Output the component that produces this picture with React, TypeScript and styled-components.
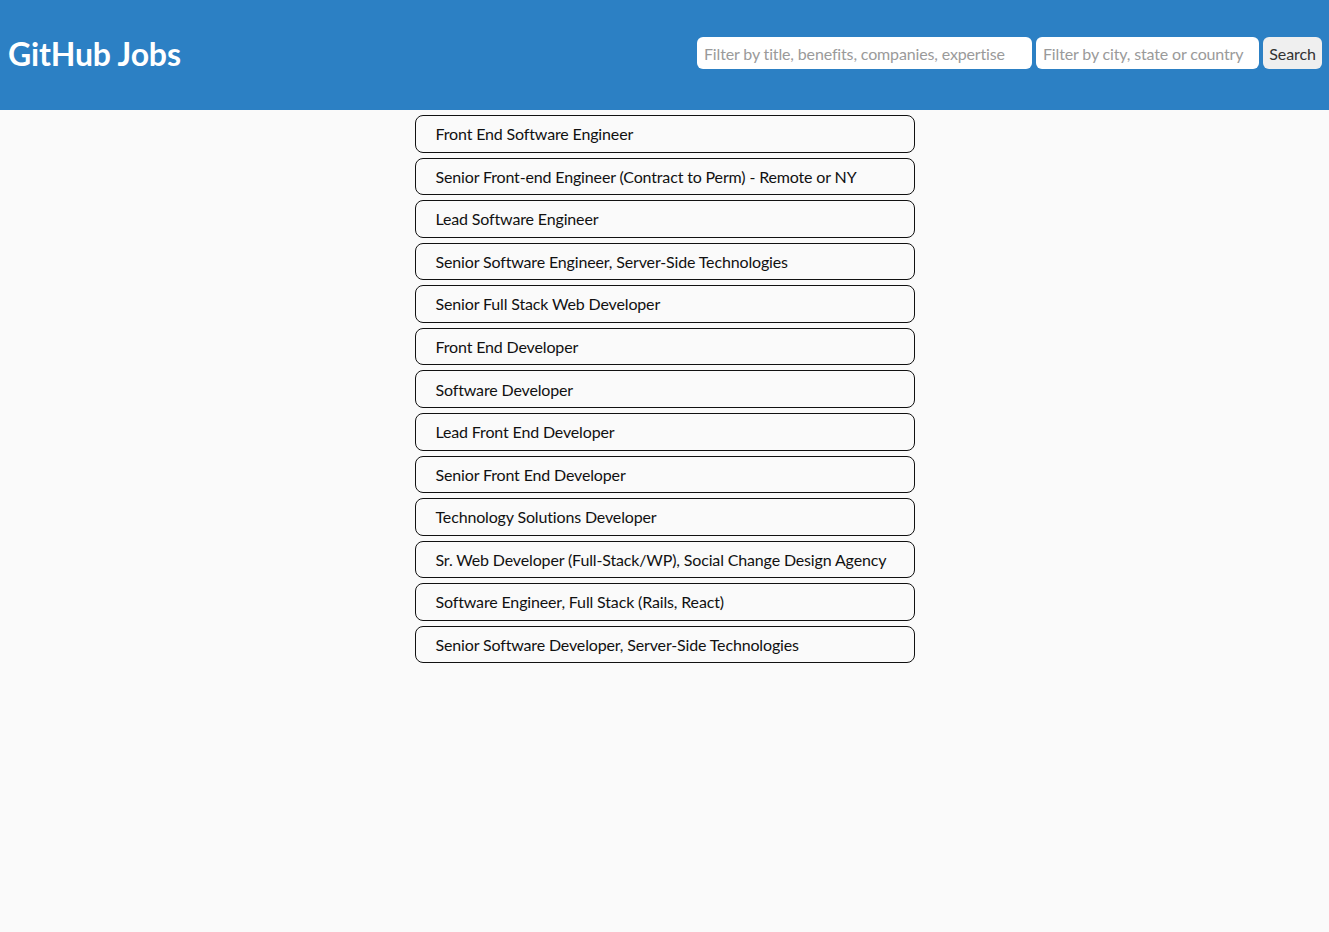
import React from "react";
import styled, { createGlobalStyle } from "styled-components";

const Global = createGlobalStyle`
  html, body { margin: 0; padding: 0; }
  body {
    background: #fafafa;
    font-family: Lato, "Open Sans", sans-serif;
    color: #111;
  }
  * { box-sizing: border-box; }
`;

const Header = styled.header`
  height: 110px;
  background: #2c80c4;
  display: flex;
  align-items: center;
  justify-content: space-between;
  padding: 0 7px 0 8px;
`;

const Title = styled.h1`
  margin: 0;
  color: #fff;
  font-size: 32px;
  font-weight: 700;
  font-family: Lato, sans-serif;
  letter-spacing: -0.15px;
  position: relative;
  top: -2px;
`;

const SearchForm = styled.form`
  display: flex;
  align-items: center;
  gap: 4px;
  margin-top: -4px;
`;

const FilterInput = styled.input<{ $w: number }>`
  width: ${(p) => p.$w}px;
  height: 32px;
  border: none;
  border-radius: 6px;
  background: #fff;
  padding: 0 7px;
  font-family: Lato, sans-serif;
  font-size: 16px;
  letter-spacing: -0.15px;
  outline: none;
  &::placeholder { color: #9a9a9a; }
`;

const SearchButton = styled.button`
  width: 59px;
  height: 32px;
  border: none;
  border-radius: 6px;
  background: #efefef;
  color: #333;
  font-family: Lato, sans-serif;
  font-size: 16px;
  letter-spacing: -0.1px;
  padding: 0;
`;

const List = styled.ul`
  list-style: none;
  margin: 5px auto 0;
  padding: 0;
  width: 500px;
  display: flex;
  flex-direction: column;
  gap: 5px;
`;

const JobCard = styled.li`
  border: 1px solid #111;
  border-radius: 8px;
  padding: 8.2px 20px;
  font-size: 16px;
  line-height: 1.2;
  letter-spacing: -0.15px;
  white-space: nowrap;
  color: #111;
`;

const jobs = [
  "Front End Software Engineer",
  "Senior Front-end Engineer (Contract to Perm) - Remote or NY",
  "Lead Software Engineer",
  "Senior Software Engineer, Server-Side Technologies",
  "Senior Full Stack Web Developer",
  "Front End Developer",
  "Software Developer",
  "Lead Front End Developer",
  "Senior Front End Developer",
  "Technology Solutions Developer",
  "Sr. Web Developer (Full-Stack/WP), Social Change Design Agency",
  "Software Engineer, Full Stack (Rails, React)",
  "Senior Software Developer, Server-Side Technologies",
];

export default function App() {
  return (
    <>
      <Global />
      <Header>
        <Title>GitHub Jobs</Title>
        <SearchForm onSubmit={(e) => e.preventDefault()}>
          <FilterInput $w={335} placeholder="Filter by title, benefits, companies, expertise" />
          <FilterInput $w={223} placeholder="Filter by city, state or country" />
          <SearchButton type="submit">Search</SearchButton>
        </SearchForm>
      </Header>
      <List>
        {jobs.map((j) => (
          <JobCard key={j}>{j}</JobCard>
        ))}
      </List>
    </>
  );
}
